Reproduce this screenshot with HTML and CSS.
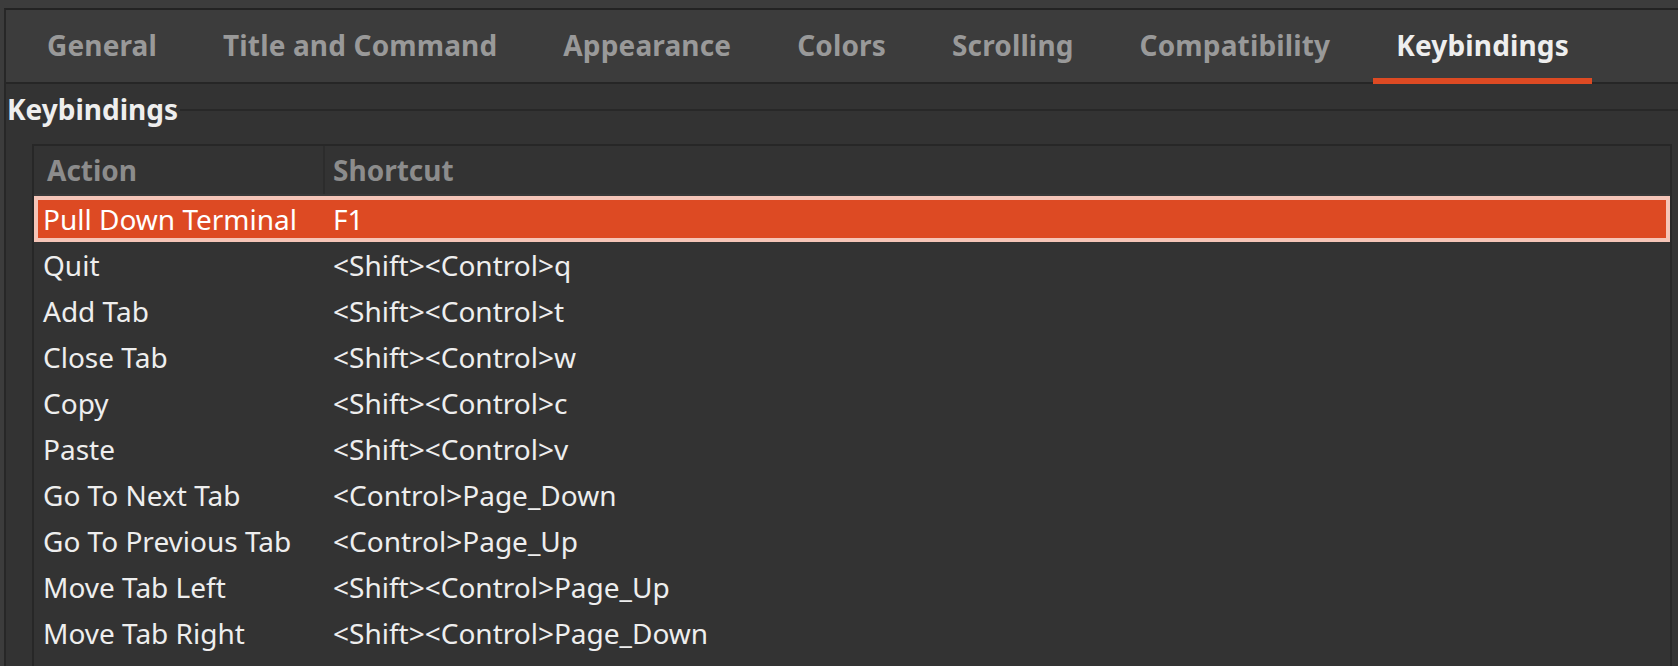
FILE: index.html
```html
<!DOCTYPE html>
<html lang="en">
<head>
<meta charset="utf-8">
<title>Preferences - Keybindings</title>
<link rel="stylesheet" href="styles.css">
</head>
<body>
<div class="notebook">
  <div class="tabbar">
    <div class="tab first">General</div>
    <div class="tab">Title and Command</div>
    <div class="tab">Appearance</div>
    <div class="tab">Colors</div>
    <div class="tab">Scrolling</div>
    <div class="tab">Compatibility</div>
    <div class="tab active">Keybindings</div>
  </div>
  <div class="page">
    <div class="frame-head">
      <span class="frame-label">Keybindings</span>
      <span class="frame-line"></span>
    </div>
    <div class="tree">
      <div class="tree-header">
        <div class="hcell c1">Action</div>
        <div class="hcell c2">Shortcut</div>
      </div>
      <div class="row selected"><div class="cell c1">Pull Down Terminal</div><div class="cell c2">F1</div></div>
      <div class="row"><div class="cell c1">Quit</div><div class="cell c2">&lt;Shift&gt;&lt;Control&gt;q</div></div>
      <div class="row"><div class="cell c1">Add Tab</div><div class="cell c2">&lt;Shift&gt;&lt;Control&gt;t</div></div>
      <div class="row"><div class="cell c1">Close Tab</div><div class="cell c2">&lt;Shift&gt;&lt;Control&gt;w</div></div>
      <div class="row"><div class="cell c1">Copy</div><div class="cell c2">&lt;Shift&gt;&lt;Control&gt;c</div></div>
      <div class="row"><div class="cell c1">Paste</div><div class="cell c2">&lt;Shift&gt;&lt;Control&gt;v</div></div>
      <div class="row"><div class="cell c1">Go To Next Tab</div><div class="cell c2">&lt;Control&gt;Page_Down</div></div>
      <div class="row"><div class="cell c1">Go To Previous Tab</div><div class="cell c2">&lt;Control&gt;Page_Up</div></div>
      <div class="row"><div class="cell c1">Move Tab Left</div><div class="cell c2">&lt;Shift&gt;&lt;Control&gt;Page_Up</div></div>
      <div class="row"><div class="cell c1">Move Tab Right</div><div class="cell c2">&lt;Shift&gt;&lt;Control&gt;Page_Down</div></div>
    </div>
  </div>
</div>
</body>
</html>
```

FILE: styles.css
```css
html, body {
  margin: 0;
  padding: 0;
  height: 100%;
}

body {
  background: #3c3c3c;
  font-family: "Noto Sans", "DejaVu Sans", sans-serif;
  font-size: 28px;
  color: #eeeeee;
  overflow: hidden;
}

.notebook {
  margin: 8px 0 0 4px;
  border-top: 2px solid #232323;
  border-left: 2px solid #272727;
  height: calc(100% - 10px);
  display: flex;
  flex-direction: column;
}

.tabbar {
  display: flex;
  align-items: stretch;
  gap: 20px;
  height: 72px;
  padding-left: 18px;
  background: #3c3c3c;
  border-bottom: 2px solid #262626;
  flex: none;
}

.tab {
  display: flex;
  align-items: center;
  padding: 2px 23px 0;
  margin-bottom: -2px;
  border-bottom: 6px solid transparent;
  font-weight: 700;
  color: #999999;
  line-height: 30px;
  letter-spacing: 0.15px;
  white-space: nowrap;
}

.tab.active {
  color: #eeeeee;
  border-bottom-color: #dd4a23;
}

.page {
  flex: 1;
  background: #333333;
  display: flex;
  flex-direction: column;
  padding: 10px 0 0 0;
  min-height: 0;
}

.frame-head {
  display: flex;
  align-items: flex-start;
  height: 30px;
}

.frame-label {
  font-weight: 700;
  color: #eeeeee;
  line-height: 30px;
  padding-left: 1px;
  padding-right: 2px;
}

.frame-line {
  flex: 1;
  height: 2px;
  margin-top: 15px;
  background: #282828;
}

.tree {
  margin: 20px 6px 0 26px;
  border: 2px solid #272727;
  border-bottom: none;
  flex: 1;
  background: #333333;
}

.tree-header {
  display: flex;
  height: 48px;
  border-bottom: 2px solid #393939;
}

.hcell {
  display: flex;
  align-items: center;
  font-weight: 700;
  color: #8c8c8c;
  line-height: 30px;
}

.hcell.c1 {
  width: 289px;
  padding-left: 13px;
  box-sizing: border-box;
}

.hcell.c2 {
  border-left: 2px solid #2c2c2c;
  padding-left: 8px;
  flex: 1;
}

.row {
  display: flex;
  align-items: center;
  height: 46px;
  line-height: 30px;
  color: #eeeeee;
}

.row .c1 {
  width: 289px;
  padding-left: 9px;
  box-sizing: border-box;
  white-space: nowrap;
}

.row .c2 {
  padding-left: 10px;
  white-space: nowrap;
}

.row.selected {
  background: #dd4a23;
  box-shadow: inset 0 0 0 4px #f5c5b8;
  color: #ffffff;
}
```
